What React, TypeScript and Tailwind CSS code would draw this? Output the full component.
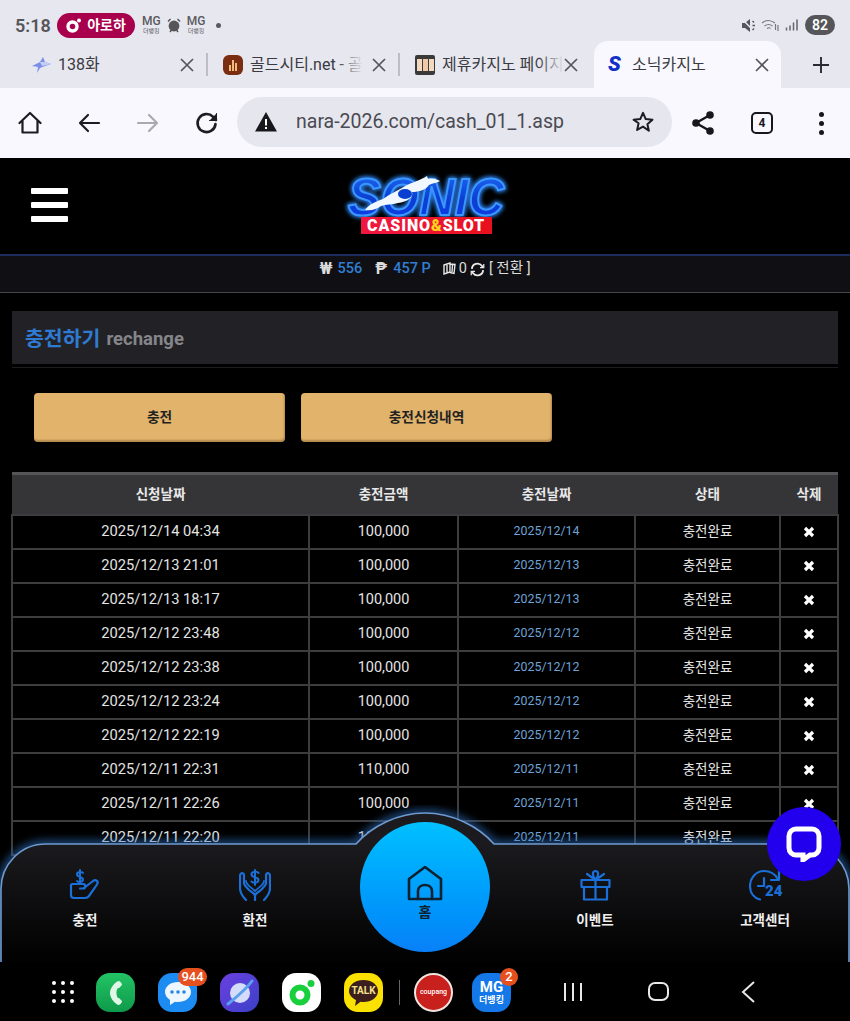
import React from "react";

const rows: [string, string, string][] = [
  ["2025/12/14 04:34", "100,000", "2025/12/14"],
  ["2025/12/13 21:01", "100,000", "2025/12/13"],
  ["2025/12/13 18:17", "100,000", "2025/12/13"],
  ["2025/12/12 23:48", "100,000", "2025/12/12"],
  ["2025/12/12 23:38", "100,000", "2025/12/12"],
  ["2025/12/12 23:24", "100,000", "2025/12/12"],
  ["2025/12/12 22:19", "100,000", "2025/12/12"],
  ["2025/12/11 22:31", "110,000", "2025/12/11"],
  ["2025/12/11 22:26", "100,000", "2025/12/11"],
  ["2025/12/11 22:20", "100,000", "2025/12/11"],
];

const Close = () => (
  <svg width="16" height="16" viewBox="0 0 16 16" className="shrink-0">
    <path d="M2 2 14 14M14 2 2 14" stroke="#55555c" strokeWidth="1.7" fill="none" />
  </svg>
);

const Sep = () => <div className="w-[2px] h-[23px] bg-[#bdbdc6] shrink-0" />;

function Tab({ icon, title, fade }: { icon: React.ReactNode; title: string; fade?: boolean }) {
  return (
    <div className="w-[190px] shrink-0 flex items-center pl-[15px] pr-[11px] gap-[7px]">
      <div className="w-[20px] h-[20px] shrink-0 flex items-center justify-center">{icon}</div>
      <div className="relative flex-1 min-w-0 whitespace-nowrap text-[16px] text-[#3a3a40]">
        <span className="relative">
          {title}
          {fade && <span className="absolute right-0 top-0 bottom-0 w-[26px] bg-gradient-to-r from-transparent to-[#e7e7ef]" />}
        </span>
      </div>
      <Close />
    </div>
  );
}

const MG = () => (
  <div className="flex flex-col items-center leading-none text-[#5a5a60]">
    <span className="text-[12px] font-medium leading-[12px]">MG</span>
    <span className="text-[6px] leading-[8px]">더뱅킹</span>
  </div>
);

function StatusBar() {
  return (
    <div className="h-[41px] flex items-center pl-[15px] pr-[15px] pt-[9px]">
      <span className="text-[18px] font-semibold text-[#55555a] w-[42px]">5:18</span>
      <div className="h-[25px] w-[78px] rounded-full bg-[#a8004c] flex items-center justify-center gap-[6px] text-white text-[14px] font-bold">
        <svg width="15" height="15" viewBox="0 0 15 15">
          <circle cx="6.500" cy="8.500" r="4.500" stroke="#fff" strokeWidth="3.400" fill="none" />
          <circle cx="13" cy="2.500" r="2" fill="#fff" />
        </svg>
        아로하
      </div>
      <div className="ml-[7px] flex items-center gap-[6px]">
        <MG />
        <svg width="14" height="15" viewBox="0 0 14 15">
          <circle cx="7" cy="8" r="5.400" fill="#55555a" />
          <path d="M1 3.500 3.500 1M13 3.500 10.500 1M3 14l1.500-2M11 14l-1.500-2" stroke="#55555a" strokeWidth="1.500" />
        </svg>
        <MG />
      </div>
      <div className="ml-[11px] w-[5px] h-[5px] rounded-full bg-[#5a5a60]" />
      <div className="ml-auto flex items-center gap-[5px]">
        <svg width="15" height="15" viewBox="0 0 15 15">
          <path d="M1 5h3l5-4v13L4 10H1z" fill="#55555a" />
          <path d="M1 1 13 13" stroke="#e7e7ef" strokeWidth="1.500" />
          <path d="M11.500 3l1.500 1.500M11.500 7.500H14M11.500 12l1.500-1.500" stroke="#55555a" strokeWidth="1.400" />
        </svg>
        <svg width="19" height="14" viewBox="0 0 19 14" fill="none" stroke="#77777d" strokeWidth="1.200">
          <path d="M1 5q6-5 13 0M3.500 8q4-3 8 0M6 10.500q2-1.500 3.500 0" />
          <path d="M14.500 6v6M17 7v6" />
        </svg>
        <svg width="15" height="14" viewBox="0 0 15 14">
          <path d="M1.500 9.500v3M5 7.500v5M8.500 4.500v8M12 1.500v11" stroke="#66666c" strokeWidth="1.500" />
        </svg>
        <div className="h-[20px] w-[30px] rounded-full bg-[#55555a] text-white text-[14px] font-semibold flex items-center justify-center">
          82
        </div>
      </div>
    </div>
  );
}

function TabsRow() {
  return (
    <div className="h-[47px] flex items-stretch pl-[16px]">
      <Tab
        title="138화"
        icon={
          <svg width="20" height="18" viewBox="0 0 20 18">
            <path d="M1 10 9 6l3-5 2 5 6 2-6 2-5 2-3 5 1-6z" fill="#7b8fe6" />
            <path d="M9 6l5 0 6 2-9 2z" fill="#c4cdf5" />
          </svg>
        }
      />
      <div className="flex items-center"><Sep /></div>
      <Tab
        title="골드시티.net - 골"
        fade
        icon={
          <div className="w-[20px] h-[20px] rounded-[6px] bg-[#7a2d10] flex items-end justify-center gap-[1px] pb-[4px]">
            <div className="w-[2px] h-[6px] bg-[#eebd7a]" />
            <div className="w-[2px] h-[11px] bg-[#eebd7a]" />
            <div className="w-[2px] h-[8px] bg-[#eebd7a]" />
          </div>
        }
      />
      <div className="flex items-center"><Sep /></div>
      <Tab
        title="제휴카지노 페이지"
        fade
        icon={
          <div className="w-[20px] h-[20px] bg-[#3a3a3a] flex items-center justify-center gap-[1px] rounded-[2px]">
            <div className="w-[5px] h-[12px] bg-[#f2d8c0]" />
            <div className="w-[5px] h-[12px] bg-[#f0c8a8]" />
            <div className="w-[5px] h-[12px] bg-[#f2d8c0]" />
          </div>
        }
      />
      <div className="w-[187px] ml-[4px] shrink-0 rounded-t-[14px] bg-[#f9f8fe] flex items-center pl-[14px] pr-[11px]">
        <span className="w-[18px] text-[21px] leading-none font-black italic text-[#1030c8]">S</span>
        <span className="ml-[6px] flex-1 text-[16px] text-[#3a3a40]">소닉카지노</span>
        <Close />
      </div>
      <div className="flex-1 flex items-center justify-center pl-[10px]">
        <svg width="20" height="20" viewBox="0 0 20 20">
          <path d="M10 2v16M2 10h16" stroke="#2a2a30" strokeWidth="1.900" />
        </svg>
      </div>
    </div>
  );
}

const ICON = { fill: "none", stroke: "#1c1c22", strokeWidth: 2.2, strokeLinecap: "round", strokeLinejoin: "round" } as const;

function Toolbar() {
  return (
    <div className="h-[70px] bg-[#f9f8fe] flex items-center pl-[18px]">
      <svg width="24" height="24" viewBox="0 0 24 24" {...ICON}>
        <path d="M1.500 12 12 2l10.500 10M4.500 10v11.500h15V10" />
      </svg>
      <svg className="ml-[35px]" width="24" height="24" viewBox="0 0 24 24" {...ICON}>
        <path d="M22 12H3M11 4l-8 8 8 8" />
      </svg>
      <svg className="ml-[35px]" width="24" height="24" viewBox="0 0 24 24" {...ICON} stroke="#a9a9b0">
        <path d="M2 12h19M13 4l8 8-8 8" />
      </svg>
      <svg className="ml-[35px]" width="24" height="24" viewBox="0 0 24 24" {...ICON} strokeWidth={2.6}>
        <path d="M20.500 13a9 9 0 1 1-2.600-7.300L21 9" />
        <path d="M21.500 2.500V9.500H14.500" fill="#1c1c22" strokeWidth="1" />
      </svg>
      <div className="ml-[18px] mb-[2px] w-[435px] h-[50px] rounded-full bg-[#e6e6ee] flex items-center pl-[18px] pr-[18px]">
        <svg width="22" height="20" viewBox="0 0 22 20">
          <path d="M11 0 22 19.500H0z" fill="#17171c" />
          <path d="M11 7v6.500M11 15v2" stroke="#fff" strokeWidth="2" />
        </svg>
        <span className="ml-[19px] text-[19.5px] text-[#4a4a52]">nara-2026.com/cash_01_1.asp</span>
        <svg className="ml-auto" width="22" height="22" viewBox="0 0 24 24" {...ICON}>
          <path d="m12 2 3 6.800 7.300.7-5.500 4.900 1.600 7.200L12 17l-6.400 3.600 1.600-7.200L1.700 9.500 9 8.800z" />
        </svg>
      </div>
      <svg className="ml-[19px]" width="24" height="26" viewBox="0 0 24 26">
        <path d="M19 5 5 13l14 8" stroke="#17171c" strokeWidth="2.400" fill="none" />
        <circle cx="19" cy="5" r="3.800" fill="#17171c" />
        <circle cx="5" cy="13" r="3.800" fill="#17171c" />
        <circle cx="19" cy="21" r="3.800" fill="#17171c" />
      </svg>
      <div className="ml-[36px] w-[22px] h-[22px] rounded-[5px] border-[2px] border-[#17171c] flex items-center justify-center text-[12px] font-bold text-[#17171c]">
        4
      </div>
      <div className="ml-[46px] flex flex-col gap-[4px]">
        <div className="w-[5px] h-[5px] rounded-full bg-[#17171c]" />
        <div className="w-[5px] h-[5px] rounded-full bg-[#17171c]" />
        <div className="w-[5px] h-[5px] rounded-full bg-[#17171c]" />
      </div>
    </div>
  );
}

function Logo() {
  return (
    <div className="flex flex-col items-center">
      <svg width="170" height="48" viewBox="0 0 170 48" className="-mb-[3px] overflow-visible">
        <defs>
          <linearGradient id="sonicfill" x1="0" y1="0" x2="0" y2="1">
            <stop offset="0.1" stopColor="#1a66f0" />
            <stop offset="0.55" stopColor="#0a3ed0" />
            <stop offset="0.8" stopColor="#083ce0" />
          </linearGradient>
          <filter id="sonicglow" x="-10%" y="-25%" width="120%" height="150%">
            <feGaussianBlur in="SourceGraphic" stdDeviation="2.500" result="b" />
            <feMerge>
              <feMergeNode in="b" />
              <feMergeNode in="b" />
              <feMergeNode in="SourceGraphic" />
            </feMerge>
          </filter>
          <filter id="streak" x="-10%" y="-30%" width="120%" height="160%">
            <feGaussianBlur stdDeviation="0.500" />
          </filter>
        </defs>
        <text
          x="85"
          y="43"
          textAnchor="middle"
          textLength="156"
          lengthAdjust="spacingAndGlyphs"
          fontFamily="'Liberation Sans',sans-serif"
          fontWeight="700"
          fontStyle="italic"
          fontSize="52"
          fill="url(#sonicfill)"
          stroke="#3a96ff"
          strokeWidth="2"
          filter="url(#sonicglow)"
        >
          SONIC
        </text>
        <g filter="url(#streak)" fill="#f2f8ff">
          <path d="M24 38c4-6 10-8 18-11 8-6 16-9 24-14 6-3 12-4 20-9l1 3c5-1 8 0 12 2-3 2-7 2-11 4-4 6-12 7-17 7 2 5-5 10-14 11-6 2-12 1-17 3-4 3-9 5-16 4z" />
        </g>
        <ellipse cx="64" cy="22" rx="7" ry="5" fill="#0a3ed0" />
      </svg>
      <div className="h-[17px] w-[131px] bg-gradient-to-r from-[#f01840] to-[#e8101c] flex items-center justify-center text-[16px] leading-none font-black text-white tracking-[0.9px]">
        CASINO<span className="text-[#ffd21e]">&amp;</span>SLOT
      </div>
    </div>
  );
}

function Header() {
  return (
    <div className="h-[98px] bg-black border-b-[2px] border-[#1c2c5c] flex items-center justify-center relative pb-[6px] pl-[2px]">
      <div className="absolute left-[31px] top-[30px] w-[37px] flex flex-col gap-[8px]">
        <div className="h-[6px] rounded-[1px] bg-white" />
        <div className="h-[6px] rounded-[1px] bg-white" />
        <div className="h-[6px] rounded-[1px] bg-white" />
      </div>
      <Logo />
    </div>
  );
}

function Balance() {
  return (
    <div className="h-[37px] bg-[#101014] border-b border-[#45454a] flex justify-center pt-[3px] text-[14.5px] leading-[20px] text-[#dcdcdc]">
      <div className="flex items-start">
        <span className="font-bold text-[16px]">₩</span>
        <span className="ml-[5px] text-[#2f7fd4] font-medium">556</span>
        <span className="ml-[13px] font-bold text-[16px]">₱</span>
        <span className="ml-[6px] text-[#2f7fd4] font-medium">457 P</span>
        <svg className="ml-[12px] mt-[3px]" width="13" height="13" viewBox="0 0 13 13" fill="none" stroke="#e8e8e8" strokeWidth="1.400">
          <path d="M1 3 7 1v9l-6 2zM7 2l5 .5-1 9-4-1M4 3v8M9.500 3 9 10" />
        </svg>
        <span className="ml-[3px]">0</span>
        <svg className="ml-[3px] mt-[3px]" width="15" height="15" viewBox="0 0 24 24" fill="none" stroke="#e8e8e8" strokeWidth="3">
          <path d="M3 11a9 9 0 0 1 16-5l2 3M21 13a9 9 0 0 1-16 5l-2-3" />
          <path d="M22 3v6h-6M2 21v-6h6" strokeWidth="2" />
        </svg>
        <span className="ml-[4px]">[ 전환 ]</span>
      </div>
    </div>
  );
}

function Section() {
  return (
    <div className="px-[12px] pt-[18px]">
      <div className="h-[53px] bg-[#222226] flex items-center pl-[13px] pt-[3px] gap-[6px]">
        <span className="text-[20.5px] font-bold text-[#2f7ad2]">충전하기</span>
        <span className="text-[18.5px] font-bold text-[#85858a] pt-[2px]">rechange</span>
      </div>
      <div className="h-[1px] mt-[3px] bg-[#1d1d20]" />
      <div className="pl-[22px] pt-[25px] flex gap-[16px]">
        {["충전", "충전신청내역"].map((t) => (
          <div
            key={t}
            className="w-[251px] h-[49px] rounded-[4px] bg-[#e2b36b] shadow-[inset_-1px_-2px_2px_rgba(90,60,20,0.35)] flex items-center justify-center text-[13.7px] font-bold text-[#222]"
          >
            {t}
          </div>
        ))}
      </div>
    </div>
  );
}

function Grid() {
  const th = "font-bold text-[13.5px] text-[#e8e8e8] p-0";
  const td = "border-[2px] border-[#3d3d40] p-0 text-center";
  return (
    <div className="pl-[11px] pt-[30px]">
      <table className="w-[826px] table-fixed border-collapse">
        <colgroup>
          <col className="w-[297px]" />
          <col className="w-[149px]" />
          <col className="w-[177px]" />
          <col className="w-[145px]" />
          <col className="w-[58px]" />
        </colgroup>
        <thead>
          <tr className="h-[41px] bg-[#353538] border-t-[3px] border-[#555558]">
            <th className={th}>신청날짜</th>
            <th className={th}>충전금액</th>
            <th className={th}>충전날짜</th>
            <th className={th}>상태</th>
            <th className={th}>삭제</th>
          </tr>
        </thead>
        <tbody>
          {rows.map((r, i) => (
            <tr key={i} className="h-[34px] bg-black">
              <td className={`${td} text-[14.7px] text-[#e4e4e4]`}>{r[0]}</td>
              <td className={`${td} text-[14.5px] text-[#e4e4e4]`}>{r[1]}</td>
              <td className={`${td} text-[12.4px] text-[#6fa3d6]`}>{r[2]}</td>
              <td className={`${td} text-[13.5px] text-[#e4e4e4]`}>충전완료</td>
              <td className={td}>
                <svg className="inline-block align-middle" width="12" height="12" viewBox="0 0 12 12">
                  <path d="M2 2l8 8M10 2l-8 8" stroke="#fff" strokeWidth="3.200" />
                </svg>
              </td>
            </tr>
          ))}
        </tbody>
      </table>
    </div>
  );
}

const BLUE = { fill: "none", stroke: "#1a6fd8", strokeWidth: 2.2, strokeLinecap: "round", strokeLinejoin: "round" } as const;

const navIcons = {
  hand: (
    <svg width="32" height="32" viewBox="0 0 32 32" {...BLUE}>
      <path d="M2 16.500c0-1 .5-1.500 1.500-1.500H14c3 0 3 4.500 0 4.500h-3" />
      <path d="M15 19l9-7c3-2 6 .5 4 3.500l-8 11.500c-1 1.500-2 2-4 2H5c-2 0-3-1-3-3V16" />
      <path d="M14 4C13 2.500 8 2.500 8 5.500s6 2 6 5-5 3-6 1.500M11 1v13" strokeWidth="2" />
    </svg>
  ),
  hands: (
    <svg width="32" height="32" viewBox="0 0 32 32" {...BLUE}>
      <path d="M7 31C3 27 1 24 1 19V6c1-3 4-2 4 0v8c0 2 3 5 5 7 2 2 6 3 6 6v4" />
      <path d="M25 31c4-4 6-7 6-12V6c-1-3-4-2-4 0v8c0 2-3 5-5 7-2 2-6 3-6 6" />
      <path d="M7 12c0 4 5 6 9 10 4-4 9-6 9-10" strokeWidth="1.800" />
      <path d="M19.500 4c-1-2-7-2-7 1.500 0 3.500 7 2 7 5.500 0 3.500-6 3-7 1.500M16 1v15" strokeWidth="2" />
    </svg>
  ),
  gift: (
    <svg width="31" height="32" viewBox="0 0 31 32" {...BLUE}>
      <path d="M1.500 11h28v7h-28zM4 18v12.500h23V18M15.500 11v19.500" />
      <path d="M15.500 11c-4-5-3-9 0-9s4 4 0 9zM15.500 11 7 5M15.500 11 24 5" />
    </svg>
  ),
  clock: (
    <svg width="32" height="32" viewBox="0 0 32 32" {...BLUE}>
      <path d="M11 30.500C5 29 1 24 1 17 1 9 7 2 15 2c6 0 11 3 14 8" />
      <path d="M30 3v8h-8" />
      <path d="M15 9v8H9" />
    </svg>
  ),
};

function NavItem({ icon, label }: { icon: React.ReactNode; label: string }) {
  return (
    <div className="flex flex-col items-center">
      <div className="h-[32px] flex items-center">{icon}</div>
      <span className="mt-[9px] text-[13.5px] font-bold text-[#f0f0f0] leading-[20px]">{label}</span>
    </div>
  );
}

function BottomNav() {
  return (
    <div className="absolute left-0 right-0 top-[805px] h-[158px]">
      <svg className="absolute inset-0" width="850" height="158" viewBox="0 0 850 158">
        <defs>
          <linearGradient id="navfill" x1="0" y1="0" x2="0" y2="1">
            <stop offset="0.2" stopColor="#1b1b1f" />
            <stop offset="0.95" stopColor="#020202" />
          </linearGradient>
          <filter id="navglow" x="-5%" y="-30%" width="110%" height="160%">
            <feGaussianBlur stdDeviation="4" />
          </filter>
        </defs>
        <path
          d="M1 158V84C1 60 20 39 46 39H356C372 21 398 8 425 8S478 21 494 39H806C830 39 849 60 849 84V158"
          fill="none"
          stroke="#2f6fc0"
          strokeWidth="5"
          filter="url(#navglow)"
        />
        <path
          d="M1 158V84C1 60 20 39 46 39H356C372 21 398 8 425 8S478 21 494 39H806C830 39 849 60 849 84V158Z"
          fill="url(#navfill)"
          stroke="#6f9ad0"
          strokeWidth="1.600"
        />
      </svg>
      <div className="absolute inset-x-0 top-[64px] grid grid-cols-5">
        <NavItem icon={navIcons.hand} label="충전" />
        <NavItem icon={navIcons.hands} label="환전" />
        <div />
        <NavItem icon={navIcons.gift} label="이벤트" />
        <div className="relative">
          <NavItem icon={navIcons.clock} label="고객센터" />
          <span className="absolute left-[85px] top-[13px] text-[15px] leading-[18px] font-black text-[#1a6fd8]">24</span>
        </div>
      </div>
      <div className="absolute left-[360px] top-[17px] w-[130px] h-[130px] rounded-full bg-gradient-to-b from-[#00c0ff] to-[#0a80f8] flex flex-col items-center pt-[43px]">
        <svg width="36" height="36" viewBox="0 0 36 36" fill="none" stroke="#10202e" strokeWidth="2.600" strokeLinejoin="round" strokeLinecap="round">
          <path d="M2 14 18 2l16 12v20H2z" />
          <path d="M11 34V26c0-8 14-8 14 0v8" />
        </svg>
        <span className="mt-[2px] text-[14px] font-bold text-[#10202e] leading-[18px]">홈</span>
      </div>
    </div>
  );
}

function Chat() {
  return (
    <div className="absolute left-[767px] top-[807px] w-[74px] h-[74px] rounded-full bg-[#2200ee] flex items-center justify-center">
      <svg width="36" height="36" viewBox="0 0 36 36">
        <path
          d="M10 3h16a7 7 0 0 1 7 7v12a7 7 0 0 1-7 7h-2l-7 5v-5h-7a7 7 0 0 1-7-7V10a7 7 0 0 1 7-7z"
          fill="none"
          stroke="#fff"
          strokeWidth="5"
        />
      </svg>
    </div>
  );
}

function App1({ className, children }: { className: string; children?: React.ReactNode }) {
  return (
    <div className={`w-[39px] h-[39px] rounded-[14px] relative flex items-center justify-center shrink-0 ${className}`}>
      {children}
    </div>
  );
}

const Badge = ({ children, className }: { children: React.ReactNode; className: string }) => (
  <div className={`absolute h-[18px] rounded-full bg-[#e6501e] text-white text-[13px] leading-[18px] font-medium text-center ${className}`}>
    {children}
  </div>
);

function Dock() {
  return (
    <div className="h-[59px] bg-black flex items-center pl-[52px] relative z-10">
      <div className="grid grid-cols-3 gap-x-[5px] gap-y-[5px] w-[22px]">
        {Array.from({ length: 9 }).map((_, i) => (
          <div key={i} className="w-[4px] h-[4px] rounded-full bg-white" />
        ))}
      </div>
      <div className="ml-[22px] flex items-center gap-[23px] mt-[2px]">
        <App1 className="bg-gradient-to-b from-[#22c465] to-[#0e9a4a]">
          <svg width="14" height="26" viewBox="0 0 14 26">
            <path d="M9 1C4 4 1 9 1 13s3 9 8 12c2 0 4-2 4-4l-3-3c-1 0-1 0-1.500-.5C7 14 7 11 8.500 8.500 9 8 9 8 10 8l3-3c0-2-2-4-4-4z" fill="#dff7e6" />
          </svg>
        </App1>
        <App1 className="bg-[#1c8cf2]">
          <svg width="28" height="26" viewBox="0 0 28 26">
            <path d="M14 2c7 0 13 4 13 10s-6 10-13 10c-1 0-2 0-3-.2L6 25v-5C3 18 1 15 1 12 1 6 7 2 14 2z" fill="#eef6ff" />
            <circle cx="8" cy="12" r="1.800" fill="#2a86e8" />
            <circle cx="14" cy="12" r="1.800" fill="#2a86e8" />
            <circle cx="20" cy="12" r="1.800" fill="#2a86e8" />
          </svg>
          <Badge className="left-[20px] -top-[5px] w-[29px]">944</Badge>
        </App1>
        <App1 className="bg-gradient-to-br from-[#6a3fe0] to-[#3a40c8]">
          <svg width="30" height="30" viewBox="0 0 30 30">
            <circle cx="15" cy="15" r="10" fill="#d4dcfa" />
            <path d="M3 26C8 22 22 10 27 3" stroke="#5aa0f0" strokeWidth="3" fill="none" strokeLinecap="round" />
          </svg>
        </App1>
        <App1 className="bg-white">
          <svg width="28" height="28" viewBox="0 0 28 28">
            <circle cx="12" cy="16" r="7.500" fill="none" stroke="#18d03c" strokeWidth="6" />
            <circle cx="23" cy="4.500" r="3.500" fill="#18d03c" />
          </svg>
        </App1>
        <App1 className="bg-[#fae100]">
          <svg width="31" height="28" viewBox="0 0 31 28" className="absolute left-[4px] top-[6px]">
            <path d="M15.500 1C23.500 1 30 5.500 30 12s-6.500 11-14.500 11c-1 0-2 0-3-.2L7 27l1-6C4 19 1 16 1 12 1 5.500 7.500 1 15.500 1z" fill="#3c1e1e" />
          </svg>
          <span className="relative text-[#f3e38a] text-[10px] font-bold leading-none -mt-[3px]">TALK</span>
        </App1>
      </div>
      <div className="ml-[16px] mt-[2px] w-[1px] h-[25px] bg-[#666]" />
      <div className="ml-[14px] mt-[2px] w-[39px] h-[39px] rounded-full bg-[#c8201c] border-[2px] border-[#f3e4e0] flex items-center justify-center text-[7px] font-medium text-white">
        coupang
      </div>
      <div className="ml-[19px] mt-[2px]">
        <App1 className="bg-[#1478e8] flex-col text-white font-bold">
          <span className="text-[15px] leading-[15px]">MG</span>
          <span className="text-[9px] leading-[11px]">더뱅킹</span>
          <Badge className="left-[28px] -top-[5px] w-[18px]">2</Badge>
        </App1>
      </div>
      <div className="ml-[53px] flex gap-[6px]">
        <div className="w-[2px] h-[18px] bg-[#e8e8e8]" />
        <div className="w-[2px] h-[18px] bg-[#e8e8e8]" />
        <div className="w-[2px] h-[18px] bg-[#e8e8e8]" />
      </div>
      <div className="ml-[66px] w-[21px] h-[19px] rounded-[7px] border-[2px] border-[#e8e8e8]" />
      <svg className="ml-[71px]" width="16" height="22" viewBox="0 0 16 22" fill="none" stroke="#e8e8e8" strokeWidth="2">
        <path d="M14 1 3 11l11 10" />
      </svg>
    </div>
  );
}

export default function App() {
  return (
    <div className="relative w-[850px] h-[1021px] overflow-hidden bg-black flex flex-col [font-family:Roboto,'Noto_Sans_CJK_KR',sans-serif]">
      <div className="bg-[#e7e7ef]">
        <StatusBar />
        <TabsRow />
      </div>
      <Toolbar />
      <div className="flex-1 min-h-0 overflow-hidden">
        <Header />
        <Balance />
        <Section />
        <Grid />
      </div>
      <BottomNav />
      <Chat />
      <Dock />
    </div>
  );
}
